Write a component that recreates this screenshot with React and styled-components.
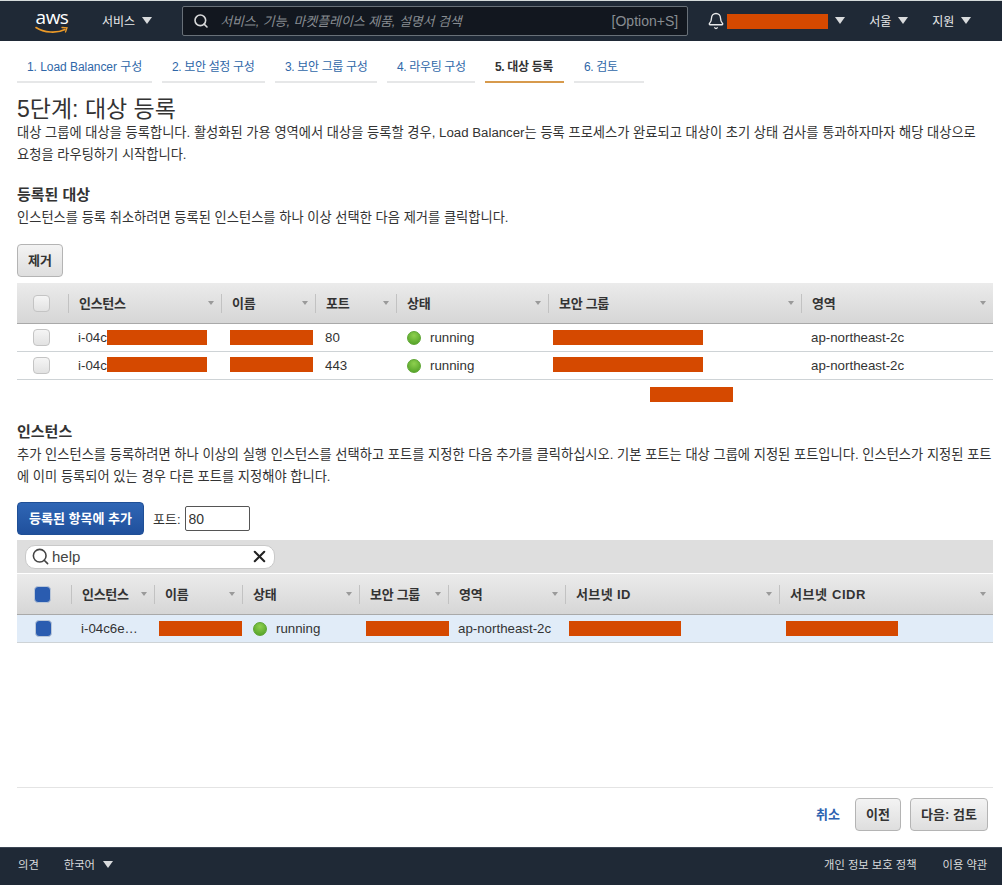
import styled, { createGlobalStyle } from "styled-components"
import { Search, Bell, X } from "lucide-react"

const GlobalStyle = createGlobalStyle`
html, body {
  margin: 0;
  padding: 0;
  background: #fff;
}
body {
  font-family: "Liberation Sans", "Noto Sans CJK KR", sans-serif;
  font-size: 13px;
  color: #333;
}
* { box-sizing: border-box; }
`

const Page = styled.div`
display: flex;
flex-direction: column;
height: 885px;
border-top: 1px solid #d5dbdb;
`
const Navbar = styled.header`
display: flex;
align-items: center;
height: 40px;
flex-shrink: 0;
background: #1f2936;
color: #e8e9ea;
font-size: 12px;
`
const Logo = styled.div`
position: relative;
width: 34px;
height: 28px;
margin: 0 33px 0 35px;
color: #fff;
font-family: "Open Sans", sans-serif;
font-size: 19px;
line-height: 20px;
text-align: center;
letter-spacing: -0.5px;
svg {
  position: absolute;
  left: 0;
  top: 19px;
}
`
const NavItem = styled.div`
display: flex;
align-items: center;
gap: ${p => p.$gap || 7}px;
margin-left: ${p => p.$left || 0}px;
padding-bottom: 2px;
white-space: nowrap;
`
const BellItem = styled(NavItem)`
padding-bottom: 0;
`
const Caret = styled.span`
display: inline-block;
width: 0;
height: 0;
border-left: ${p => p.$size || 5}px solid transparent;
border-right: ${p => p.$size || 5}px solid transparent;
border-top: ${p => (p.$size || 5) * 1.55}px solid ${p => p.$color || "#d9dbdd"};
`
const SearchBar = styled.div`
display: flex;
align-items: center;
width: 506px;
height: 30px;
margin-left: 30px;
padding: 0 9px 0 10px;
background: #12171f;
border: 1px solid #687078;
border-radius: 2px;
color: #d8d9da;
`
const SearchHint = styled.span`
flex: 1;
margin-left: 11px;
padding-bottom: 2px;
color: #888d92;
font-style: italic;
font-size: 13px;
letter-spacing: -0.1px;
`
const Shortcut = styled.span`
padding-bottom: 1px;
color: #888d92;
font-size: 14px;
`
const Redact = styled.span`
display: inline-block;
flex-shrink: 0;
width: ${p => p.$w}px;
height: 15px;
margin-left: ${p => p.$left || 0}px;
margin-bottom: ${p => (p.$raise ? 2 : 0)}px;
background: #d54900;
`
const Main = styled.main`
flex: 1;
display: flex;
flex-direction: column;
padding: 0 9px 0 17px;
`
const Tabs = styled.nav`
display: flex;
gap: 10px;
margin-top: 14px;
`
const Tab = styled.a`
display: block;
width: ${p => p.$w}px;
height: 28px;
padding: 2px 0 0 10px;
border-bottom: 2px solid ${p => (p.$active ? "#d79a4c" : "#e6e7e8")};
color: ${p => (p.$active ? "#333" : "#2f67a8")};
font-size: 12px;
font-weight: ${p => (p.$active ? 700 : 400)};
letter-spacing: ${p => p.$spacing ?? -0.35}px;
white-space: nowrap;
`
const Title = styled.h1`
margin: 14px 0 0;
font-size: 23px;
font-weight: 400;
line-height: 25px;
color: #333;
`
const Text = styled.p`
margin: 0;
font-size: 13.25px;
line-height: 22px;
color: #333;
word-break: ${p => (p.$keep ? "keep-all" : "normal")};
`
const Heading = styled.h2`
margin: ${p => p.$top}px 0 1px;
font-size: 15px;
font-weight: 700;
line-height: 22px;
color: #333;
`
const Button = styled.button`
height: 33px;
width: ${p => p.$w}px;
padding: 0 0 2px;
border: 1px solid #b4b4b4;
border-radius: 4px;
background: linear-gradient(#f3f3f3, #dedede);
color: #333;
font-family: inherit;
font-size: 13px;
font-weight: 700;
`
const PrimaryButton = styled(Button)`
border-color: #1f4f96;
background: linear-gradient(#2f66b5, #20509c);
color: #fff;
`
const TopButton = styled(Button)`
margin-top: 15px;
align-self: flex-start;
`
const Grid = styled.div`
display: grid;
grid-template-columns: ${p => p.$cols};
`
const HeadRow = styled(Grid)`
align-items: center;
height: ${p => p.$height}px;
margin-top: ${p => p.$top || 0}px;
background: linear-gradient(#ebebeb, #d6d6d6);
border-bottom: 1px solid #a9a9a9;
`
const Row = styled(Grid)`
align-items: center;
height: 28px;
background: ${p => (p.$selected ? "#e1ecf8" : "#fff")};
border-bottom: 1px solid #ced3d6;
`
const HeadCell = styled.div`
display: flex;
align-items: center;
justify-content: space-between;
height: 19px;
padding: 0 7px 0 10px;
border-left: 1px solid #c2c2c2;
color: #333;
font-size: 13px;
font-weight: 700;
white-space: nowrap;
`
const HeadLabel = styled.span`
margin-bottom: 2px;
letter-spacing: ${p => p.$spacing ?? -0.3}px;
`
const CheckCell = styled.div`
display: flex;
padding-left: ${p => p.$left}px;
`
const Cell = styled.div`
display: flex;
align-items: center;
padding-left: ${p => p.$left ?? 10}px;
color: #333;
font-size: 13.3px;
white-space: nowrap;
`
const Checkbox = styled.span`
display: block;
width: 17px;
height: 17px;
border-radius: 4px;
border: 1px solid ${p => (p.$checked ? "#b9c6d8" : "#c4c4c4")};
background: ${p =>
    p.$checked ? "#2a5cb0" : "linear-gradient(#f5f5f5, #e2e2e2)"};
`
const Dot = styled.span`
display: block;
width: 14px;
height: 14px;
margin-right: 9px;
border-radius: 50%;
background: radial-gradient(circle at 50% 30%, #8ed04f, #4c9c22);
border: 1px solid #5da532;
`
const Floating = styled(Redact)`
display: block;
margin: 7px 0 0 633px;
`
const PortRow = styled.div`
display: flex;
align-items: center;
margin-top: 14px;
`
const PortLabel = styled.label`
margin-left: 9px;
font-size: 13px;
color: #333;
`
const PortInput = styled.input`
width: 65px;
height: 25px;
margin-left: 4px;
padding: 0 3px;
border: 1px solid #555;
border-radius: 2px;
font-family: inherit;
font-size: 14px;
color: #333;
`
const FilterBar = styled.div`
display: flex;
align-items: center;
height: 34px;
margin-top: 5px;
padding-left: 8px;
background: #dedede;
border-bottom: 1px solid #fff;
`
const FilterBox = styled.div`
display: flex;
align-items: center;
width: 250px;
height: 24px;
padding: 0 5px 0 5px;
border: 1px solid #c9c9c9;
border-radius: 10px;
background: #fff;
color: #444;
font-size: 15px;
`
const FilterText = styled.span`
flex: 1;
margin-left: 2px;
`
const Actions = styled.div`
display: flex;
align-items: center;
justify-content: flex-end;
gap: 9px;
margin-top: auto;
margin-bottom: 16px;
padding: 10px 5px 0 0;
border-top: 1px solid #e4e4e4;
`
const CancelLink = styled.a`
margin-right: 6px;
padding-bottom: 2px;
color: #2c62b0;
font-size: 13px;
font-weight: 700;
`
const Footer = styled.footer`
display: flex;
align-items: center;
height: 38px;
flex-shrink: 0;
padding: 0 16px 5px 18px;
background: #1f2936;
border-top: 1px solid #3b4654;
color: #d9dbdd;
font-size: 11.3px;
`
const FooterLink = styled.a`
display: flex;
align-items: center;
gap: 8px;
margin-left: ${p => p.$left || 0}px;
white-space: nowrap;
`

const firstCols = "51px 153px 94px 81px 152px 253px 192px"
const secondCols = "54px 83px 88px 117px 89px 117px 214px 214px"

const Head = ({ children, spacing }) => (
  <HeadCell>
    <HeadLabel $spacing={spacing}>{children}</HeadLabel>
    <Caret $size={3} $color="#9a9a9a" />
  </HeadCell>
)

const RegisteredRow = ({ port, raise }) => (
  <Row $cols={firstCols}>
    <CheckCell $left={16}><Checkbox /></CheckCell>
    <Cell>i-04c<Redact $w={100} $raise={raise} /></Cell>
    <Cell $left={9}><Redact $w={83} $raise={raise} /></Cell>
    <Cell>{port}</Cell>
    <Cell $left={11}><Dot />running</Cell>
    <Cell $left={5}><Redact $w={150} $raise={raise} /></Cell>
    <Cell>ap-northeast-2c</Cell>
  </Row>
)

const App = () => {
  return (
    <Page>
      <GlobalStyle />
      <Navbar>
        <Logo>
          aws
          <svg width="34" height="9" viewBox="0 0 34 9" fill="none">
            <path d="M1 1.5C9 7 22 7.5 30 3.5" stroke="#ec9a28" strokeWidth="1.6" strokeLinecap="round" />
            <path d="M27 1.5L32 1.8L30.5 6" stroke="#ec9a28" strokeWidth="1.3" strokeLinecap="round" />
          </svg>
        </Logo>
        <NavItem>서비스<Caret /></NavItem>
        <SearchBar>
          <Search size={16} strokeWidth={2.4} />
          <SearchHint>서비스, 기능, 마켓플레이스 제품, 설명서 검색</SearchHint>
          <Shortcut>[Option+S]</Shortcut>
        </SearchBar>
        <BellItem $left={19} $gap={2}>
          <Bell size={18} strokeWidth={1.8} />
          <Redact $w={101} />
        </BellItem>
        <NavItem $left={7}><Caret /></NavItem>
        <NavItem $left={24}>서울<Caret /></NavItem>
        <NavItem $left={24}>지원<Caret /></NavItem>
      </Navbar>

      <Main>
        <Tabs>
          <Tab $w={135} $spacing={-0.05}>1. Load Balancer 구성</Tab>
          <Tab $w={103}>2. 보안 설정 구성</Tab>
          <Tab $w={102}>3. 보안 그룹 구성</Tab>
          <Tab $w={88}>4. 라우팅 구성</Tab>
          <Tab $w={79} $active>5. 대상 등록</Tab>
          <Tab $w={70}>6. 검토</Tab>
        </Tabs>

        <Title>5단계: 대상 등록</Title>
        <Text $keep>
          대상 그룹에 대상을 등록합니다. 활성화된 가용 영역에서 대상을 등록할 경우, Load Balancer는 등록 프로세스가 완료되고 대상이 초기 상태 검사를 통과하자마자 해당 대상으로 요청을 라우팅하기 시작합니다.
        </Text>

        <Heading $top={18}>등록된 대상</Heading>
        <Text>인스턴스를 등록 취소하려면 등록된 인스턴스를 하나 이상 선택한 다음 제거를 클릭합니다.</Text>
        <TopButton $w={46}>제거</TopButton>

        <HeadRow $cols={firstCols} $height={41} $top={6}>
          <CheckCell $left={16}><Checkbox /></CheckCell>
          <Head>인스턴스</Head>
          <Head>이름</Head>
          <Head>포트</Head>
          <Head>상태</Head>
          <Head>보안 그룹</Head>
          <Head>영역</Head>
        </HeadRow>
        <RegisteredRow port="80" />
        <RegisteredRow port="443" raise />
        <Floating $w={83} />

        <Heading $top={19}>인스턴스</Heading>
        <Text>
          추가 인스턴스를 등록하려면 하나 이상의 실행 인스턴스를 선택하고 포트를 지정한 다음 추가를 클릭하십시오. 기본 포트는 대상 그룹에 지정된 포트입니다. 인스턴스가 지정된 포트에 이미 등록되어 있는 경우 다른 포트를 지정해야 합니다.
        </Text>

        <PortRow>
          <PrimaryButton $w={127}>등록된 항목에 추가</PrimaryButton>
          <PortLabel>포트:</PortLabel>
          <PortInput defaultValue="80" />
        </PortRow>

        <FilterBar>
          <FilterBox>
            <Search size={19} strokeWidth={2} />
            <FilterText>help</FilterText>
            <X size={19} strokeWidth={2.6} color="#222" />
          </FilterBox>
        </FilterBar>
        <HeadRow $cols={secondCols} $height={41}>
          <CheckCell $left={17}><Checkbox $checked /></CheckCell>
          <Head>인스턴스</Head>
          <Head>이름</Head>
          <Head>상태</Head>
          <Head>보안 그룹</Head>
          <Head>영역</Head>
          <Head spacing={0.4}>서브넷 ID</Head>
          <Head spacing={0.6}>서브넷 CIDR</Head>
        </HeadRow>
        <Row $cols={secondCols} $selected>
          <CheckCell $left={18}><Checkbox $checked /></CheckCell>
          <Cell>i-04c6e…</Cell>
          <Cell $left={5}><Redact $w={83} /></Cell>
          <Cell $left={11}><Dot />running</Cell>
          <Cell $left={7}><Redact $w={83} /></Cell>
          <Cell>ap-northeast-2c</Cell>
          <Cell $left={4}><Redact $w={112} /></Cell>
          <Cell $left={7}><Redact $w={112} /></Cell>
        </Row>

        <Actions>
          <CancelLink>취소</CancelLink>
          <Button $w={46}>이전</Button>
          <Button $w={78}>다음: 검토</Button>
        </Actions>
      </Main>

      <Footer>
        <FooterLink>의견</FooterLink>
        <FooterLink $left={25}>한국어<Caret /></FooterLink>
        <FooterLink $left={711}>개인 정보 보호 정책</FooterLink>
        <FooterLink $left={26}>이용 약관</FooterLink>
      </Footer>
    </Page>
  )
}

export default App
